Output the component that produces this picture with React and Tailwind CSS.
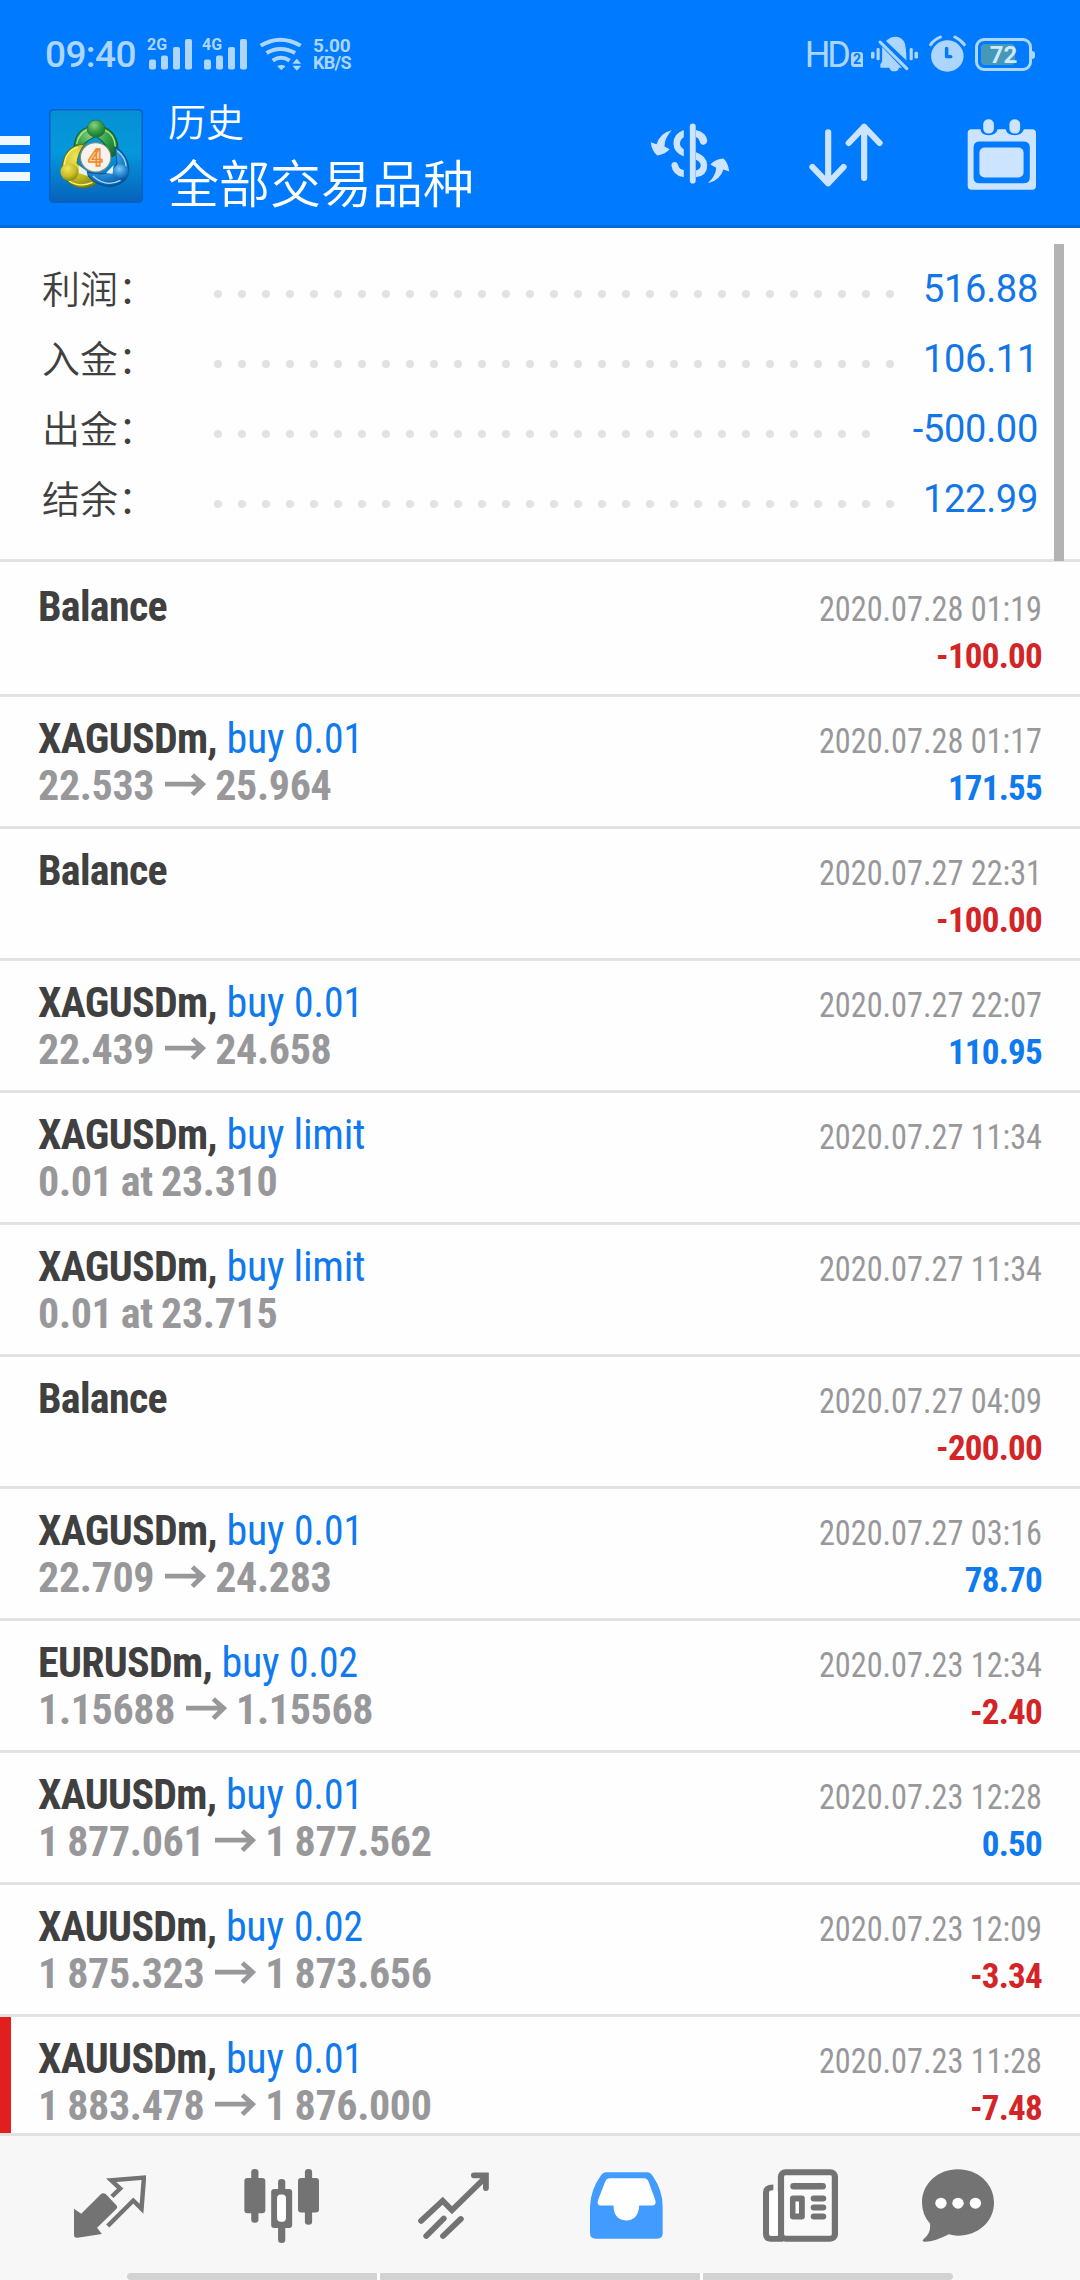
import React from "react";

const summary = [
  { label: "利润：", value: "516.88", dots: 29 },
  { label: "入金：", value: "106.11", dots: 29 },
  { label: "出金：", value: "-500.00", dots: 28 },
  { label: "结余：", value: "122.99", dots: 29 },
];

const deals = [
  { title: "Balance", time: "2020.07.28 01:19", profit: "-100.00" },
  { title: "XAGUSDm,", action: "buy", volume: "0.01", from: "22.533", to: "25.964", time: "2020.07.28 01:17", profit: "171.55" },
  { title: "Balance", time: "2020.07.27 22:31", profit: "-100.00" },
  { title: "XAGUSDm,", action: "buy", volume: "0.01", from: "22.439", to: "24.658", time: "2020.07.27 22:07", profit: "110.95" },
  { title: "XAGUSDm,", action: "buy limit", note: "0.01 at 23.310", time: "2020.07.27 11:34" },
  { title: "XAGUSDm,", action: "buy limit", note: "0.01 at 23.715", time: "2020.07.27 11:34" },
  { title: "Balance", time: "2020.07.27 04:09", profit: "-200.00" },
  { title: "XAGUSDm,", action: "buy", volume: "0.01", from: "22.709", to: "24.283", time: "2020.07.27 03:16", profit: "78.70" },
  { title: "EURUSDm,", action: "buy", volume: "0.02", from: "1.15688", to: "1.15568", time: "2020.07.23 12:34", profit: "-2.40" },
  { title: "XAUUSDm,", action: "buy", volume: "0.01", from: "1 877.061", to: "1 877.562", time: "2020.07.23 12:28", profit: "0.50" },
  { title: "XAUUSDm,", action: "buy", volume: "0.02", from: "1 875.323", to: "1 873.656", time: "2020.07.23 12:09", profit: "-3.34" },
  { title: "XAUUSDm,", action: "buy", volume: "0.01", from: "1 883.478", to: "1 876.000", time: "2020.07.23 11:28", profit: "-7.48", stopped: true },
];

const Icon = ({ box, className, children }) => (
  <svg viewBox={box} preserveAspectRatio="none" className={`block shrink-0 ${className}`}>
    {children}
  </svg>
);

const Signal = ({ label }) => (
  <div className="relative w-[44px] h-[31px]">
    <span className="absolute -left-px -top-[2px] text-[16px] leading-[16px] font-bold">{label}</span>
    <Icon box="0 0 44 31" className="w-[44px] h-[31px]">
      <g fill="currentColor">
        <rect x="1" y="20.500" width="7" height="10" rx="2" />
        <rect x="13" y="16.500" width="7" height="14" rx="2" />
        <rect x="25" y="8" width="7" height="22.500" rx="2" />
        <rect x="37" y="0" width="7" height="30.500" rx="2" />
      </g>
    </Icon>
  </div>
);

const StatusBar = () => (
  <div className="flex items-start h-[100px] pt-[34px] pl-[45px] pr-[48px] text-[#add6ff]">
    <span className="text-[37px] leading-[42px] tracking-[-0.6px] font-medium w-[103px]">09:40</span>
    <div className="flex gap-[11px] pt-[5px]">
      <Signal label="2G" />
      <Signal label="4G" />
    </div>
    <Icon box="750 112 128 102" className="w-[44px] h-[34px] mt-[3px] ml-[12px]">
      <g fill="none" stroke="currentColor" strokeWidth="12" strokeLinecap="butt">
        <path d="M755 138 Q812 102 871 138" />
        <path d="M772 160 Q812 136 855 160" />
        <path d="M790 183 Q814 166 839 183" />
      </g>
      <path d="M803 200 Q815 192 827 200 L815 212 Z M847 192 L860 177 L873 192 Z M847 198 L860 213 L873 198 Z" fill="currentColor" />
    </Icon>
    <p className="ml-[10px] pt-[3px] text-[19px] leading-[17px] tracking-[-0.2px] font-bold">
      5.00
      <br />
      <span className="text-[18px] tracking-[-0.7px]">KB/S</span>
    </p>
    <div className="flex ml-auto">
      <span className="text-[36px] leading-[42px] tracking-[-3px]">HD</span>
      <span className="mt-[18px] ml-[3px] w-[12px] h-[15px] rounded-[3px] rounded-br-none bg-[#add6ff] text-[#007aff] text-[14px] leading-[15px] font-bold text-center">2</span>
      <Icon box="963 105 135 110" className="w-[47px] h-[37px] mt-[1px] ml-[8px]">
        <g fill="currentColor">
          <path d="M1006 123 C1022 105 1048 106 1058 124 Q1064 134 1065 181 Z" />
          <path d="M995 141 L1052 202 H1043 Q1042 213 1030 213 Q1018 213 1016 202 H990 V192 L995 184 Z" />
          <rect x="963" y="155" width="10" height="20" rx="4" />
          <rect x="979" y="144" width="9" height="36" rx="4" />
          <rect x="1074" y="144" width="9" height="36" rx="4" />
          <rect x="1088" y="155" width="10" height="20" rx="4" />
        </g>
        <path d="M989 126 L1066 205" stroke="currentColor" strokeWidth="9" strokeLinecap="round" />
      </Icon>
      <Icon box="1131 103 107 111" className="w-[37px] h-[37px] mt-px ml-[11px]">
        <circle cx="1184" cy="166" r="47" fill="currentColor" />
        <path d="M1136 132 Q1144 118 1164 109 M1233 132 Q1224 118 1206 109" fill="none" stroke="currentColor" strokeWidth="9" strokeLinecap="round" />
        <path d="M1182 143 V168 H1194" fill="none" stroke="#007aff" strokeWidth="10" strokeLinecap="round" strokeLinejoin="round" />
      </Icon>
      <div className="relative w-[57px] h-[33px] mt-[4px] ml-[9px] border-[3px] border-current rounded-[9px]">
        <div className="absolute left-[3px] top-[3px] w-[34px] h-[21px] rounded-[4px] bg-[#4598b8]" />
        <div className="absolute -right-[6px] top-[10px] w-[3px] h-[8px] rounded-r bg-current" />
        <span className="absolute left-0 w-full top-[1px] text-center text-[24px] leading-[26px] font-bold text-[#cfe9ff]">72</span>
      </div>
    </div>
  </div>
);

const Logo = () => (
  <Icon box="142 326 272 282" className="w-[94px] h-[94px]">
    <defs>
      <linearGradient id="sky" x1="0" y1="0" x2="0" y2="1">
        <stop offset="0" stopColor="#0690d4" />
        <stop offset="0.450" stopColor="#0598dc" />
        <stop offset="1" stopColor="#0662bc" />
      </linearGradient>
      <radialGradient id="green" cx="40%" cy="30%" r="75%">
        <stop offset="0" stopColor="#8fd08a" />
        <stop offset="0.500" stopColor="#35a045" />
        <stop offset="1" stopColor="#127030" />
      </radialGradient>
      <radialGradient id="yellow" cx="40%" cy="30%" r="75%">
        <stop offset="0" stopColor="#f0e65a" />
        <stop offset="0.600" stopColor="#c9bb25" />
        <stop offset="1" stopColor="#7d8414" />
      </radialGradient>
      <radialGradient id="blue" cx="40%" cy="30%" r="75%">
        <stop offset="0" stopColor="#7fc8f5" />
        <stop offset="0.600" stopColor="#2285d0" />
        <stop offset="1" stopColor="#075098" />
      </radialGradient>
    </defs>
    <rect x="144" y="328" width="268" height="278" rx="12" fill="url(#sky)" stroke="#0860c4" strokeWidth="5" />
    <path d="M215 438 C218 400 240 377 278 377 C317 377 341 405 341 444 Q337 468 318 470 Q311 428 278 408 Q247 422 238 438 Z" fill="url(#green)" stroke="#14601f" strokeWidth="3" />
    <path d="M222 431 Q229 393 260 386 M300 388 Q332 401 334 440" fill="none" stroke="#a9e693" strokeWidth="4" />
    <path d="M245 431 Q184 435 179 508 Q190 559 242 563 Q274 558 282 544 L255 522 L223 488 Q226 458 245 431 Z" fill="url(#yellow)" stroke="#636f12" strokeWidth="3" />
    <path d="M187 493 Q189 452 225 441 M200 542 Q231 563 268 546" fill="none" stroke="#fff57c" strokeWidth="4" />
    <path d="M333 440 Q371 462 373 510 Q369 551 318 559 Q266 552 249 515 L290 521 Q326 520 339 488 Z" fill="url(#blue)" stroke="#075392" strokeWidth="3" />
    <path d="M340 452 Q366 473 365 502 M269 527 Q307 563 349 540" fill="none" stroke="#9bdcff" strokeWidth="4" />
    <path d="M228 495 L251 512 L254 527 L228 518 Z M307 518 L329 495 L326 520 Z" fill="#e9f2ed" />
    <circle cx="278" cy="385" r="26" fill="url(#green)" stroke="#246f32" strokeWidth="2" />
    <circle cx="201" cy="515" r="26" fill="url(#yellow)" />
    <circle cx="350" cy="515" r="23" fill="url(#blue)" />
    <circle cx="277" cy="471" r="44" fill="#f4f3ee" stroke="#888b72" strokeWidth="3" />
    <text x="276" y="497" textAnchor="middle" fill="#fbd9a8" stroke="#f0872c" strokeWidth="4" className="font-['Roboto'] text-[74px] font-bold">4</text>
  </Icon>
);

const Header = () => (
  <header className="h-[228px] bg-[#007aff] border-b-[3px] border-[#006bdf]">
    <StatusBar />
    <div className="flex items-start text-[#cce4ff]">
      <div className="flex flex-col gap-[9.500px] mt-[36px]">
        <div className="w-[30px] h-[8.500px] bg-[#f0f8ff]" />
        <div className="w-[30px] h-[8.500px] bg-[#f0f8ff]" />
        <div className="w-[30px] h-[8.500px] bg-[#f0f8ff]" />
      </div>
      <div className="ml-[19px] mt-[9px]">
        <Logo />
      </div>
      <div className="flex flex-col ml-[25px] w-[482px] -mt-[2px] text-white font-[350] font-['Noto_Sans_CJK_SC',sans-serif]">
        <span className="text-[38px] leading-[44px]">历史</span>
        <span className="text-[51px] leading-[60px] mt-[9px]">全部交易品种</span>
      </div>
      <Icon box="320 370 232 184" className="w-[80px] h-[61px] mt-[23px]">
        <path d="M444 380 V544" stroke="currentColor" strokeWidth="17" strokeLinecap="round" fill="none" />
        <path d="M418 391 V413 Q407 420 407 432 Q407 443 418 449 V471 Q388 459 388 431 Q388 402 418 391 Z" fill="currentColor" />
        <path d="M453 391 Q482 398 486 422 Q486 434 474 436 Q466 435 464 425 Q462 415 453 412 Z" fill="currentColor" />
        <path d="M453 458 Q486 469 486 498 Q486 529 453 534 V513 Q467 509 467 498 Q467 487 453 481 Z" fill="currentColor" />
        <path d="M382 498 Q383 488 392 488 Q400 489 402 499 Q406 510 418 512 V534 Q386 528 382 498 Z" fill="currentColor" />
        <path d="M383 392 Q361 417 362 441 L377 449 Q366 463 341 468 Q326 456 322 428 L339 434 Q348 401 383 392 Z" fill="currentColor" />
        <path d="M488 552 Q511 529 512 505 L495 495 Q510 479 533 477 Q546 489 550 516 L533 510 Q523 543 488 552 Z" fill="currentColor" />
      </Icon>
      <Icon box="780 370 216 192" className="w-[74px] h-[64px] mt-[23px] ml-[79px]">
        <path d="M836 398 V551 M790 502 L836 551 L881 502 M941 535 V381 M896 430 L941 381 L986 430" fill="none" stroke="currentColor" strokeWidth="18" strokeLinecap="round" strokeLinejoin="round" />
      </Icon>
      <Icon box="1241 358 200 214" className="w-[69px] h-[71px] mt-[19px] ml-[84px]">
        <path fillRule="evenodd" d="M1254 389 H1280 Q1282 407 1304 407 Q1325 407 1330 389 H1353 Q1357 407 1379 407 Q1400 407 1406 389 H1430 Q1441 389 1441 401 V560 Q1441 571 1430 571 H1254 Q1243 571 1243 560 V401 Q1243 389 1254 389 Z M1278 426 Q1260 426 1260 443 V534 Q1260 552 1278 552 H1404 Q1423 552 1423 534 V443 Q1423 426 1404 426 Z" fill="currentColor" />
        <rect x="1277" y="444" width="128" height="90" rx="15" fill="currentColor" />
        <rect x="1288" y="359" width="31" height="43" rx="15" fill="currentColor" />
        <rect x="1364" y="359" width="31" height="43" rx="15" fill="currentColor" />
      </Icon>
    </div>
  </header>
);

const Summary = () => (
  <section className="relative h-[334px] pt-[25px] pl-[42px] pr-[42px] border-b-[3px] border-[#e2e2e2] bg-[#fefefe]">
    {summary.map((item) => (
      <div key={item.label} className="flex items-center h-[70px]">
        <span className="w-[172px] pb-[4px] text-[38px] font-[350] text-[#404040] font-['Noto_Sans_CJK_SC',sans-serif]">{item.label}</span>
        <div className="flex gap-4 pt-[12px]">
          {Array.from({ length: item.dots }, (_, i) => (
            <div key={i} className="w-2 h-2 rounded-full bg-[#e2e2e2]" />
          ))}
        </div>
        <span className="ml-auto pt-[2px] text-[38px] tracking-[-0.3px] text-[#1276e8]">{item.value}</span>
      </div>
    ))}
    {/* Scrollbar */}
    <div className="absolute left-[1054px] top-[16px] w-[10px] h-[317px] bg-[#b3b3b3]" />
  </section>
);

const Arrow = () => (
  <Icon box="478 634 120 68" className="w-[41px] h-[23px] ml-[11px] mr-[9px] -mt-[3px]">
    <path d="M478 667 H590 M558 640 L588 667 L558 697" fill="none" stroke="#98989b" strokeWidth="14" />
  </Icon>
);

const DealRow = ({ deal }) => (
  <div className="relative flex justify-between h-[132px] pt-[18px] pl-[38px] pr-[38px] border-b-[3px] border-[#e2e2e2] font-['Roboto_Condensed','Roboto',sans-serif] [font-stretch:75%] whitespace-nowrap">
    {deal.stopped && <div className="absolute left-0 top-0 w-[11px] h-full bg-[#e31e1e]" />}
    <div className="text-[42px] leading-[47px]">
      <div className="flex">
        <span className="font-bold tracking-[-0.7px] text-[#404040]">{deal.title}</span>
        {deal.action && <span className="ml-[9.500px] tracking-[-0.25px] text-[#0f7af0]">{deal.action}</span>}
        {deal.volume && <span className="ml-[10px] origin-left scale-x-[0.94] text-[#0f7af0]">{deal.volume}</span>}
      </div>
      <div className="flex items-center font-bold tracking-[-0.35px] [word-spacing:-1px] text-[#98989b]">
        {deal.note}
        {deal.from && (
          <>
            <span>{deal.from}</span>
            <Arrow />
            <span>{deal.to}</span>
          </>
        )}
      </div>
    </div>
    <div className="flex flex-col items-end pt-[3px] text-[35px] leading-[47px]">
      <span className="origin-right scale-x-[0.922] text-[#98989b]">{deal.time}</span>
      {deal.profit && (
        <span className={`font-bold tracking-[-0.75px] ${deal.profit.startsWith("-") ? "text-[#d32427]" : "text-[#0f7af0]"}`}>{deal.profit}</span>
      )}
    </div>
  </div>
);

const BottomNav = () => (
  <nav className="relative h-[147px] border-t-[3px] border-[#e2e2e2] bg-[#f7f7f7] flex items-start pl-[74px] text-[#737373]">
    {/* Quotes */}
    <Icon box="215 164 209 190" className="w-[72px] h-[63px] mt-[39px]">
      <path d="M215 266 L236 281 L292 223 Q299 215 308 222 L338 255 Q343 261 337 267 L282 323 L296 342 L225 353 Q215 354 215 346 Z" fill="currentColor" />
      <path d="M325 229 L349 205 L323 180 L418 172 L411 266 L387 241 L313 318" fill="none" stroke="currentColor" strokeWidth="13" />
    </Icon>
    {/* Charts */}
    <Icon box="708 147 218 223" className="w-[75px] h-[74px] mt-[33px] ml-[98px]">
      <g fill="currentColor">
        <rect x="709" y="174" width="61" height="106" rx="9" />
        <rect x="729" y="147" width="21" height="162" rx="10" />
        <rect x="865" y="174" width="61" height="104" rx="9" />
        <rect x="885" y="147" width="21" height="168" rx="10" />
        <rect x="807" y="177" width="21" height="40" rx="10" />
        <rect x="807" y="310" width="21" height="60" rx="10" />
        <rect x="787" y="207" width="61" height="118" rx="9" />
      </g>
      <rect x="804" y="224" width="26" height="82" rx="11" fill="#fff" />
    </Icon>
    {/* Trade */}
    <Icon box="1213 155 207 200" className="w-[71px] h-[67px] mt-[36px] ml-[99px]">
      <path d="M1222 301 L1285 241 L1312 269 L1408 173 M1376 165 H1411 V203" fill="none" stroke="currentColor" strokeWidth="17" strokeLinecap="round" />
      <path d="M1237 346 L1288 294 M1286 346 L1338 295" fill="none" stroke="currentColor" strokeWidth="17" strokeLinecap="round" />
    </Icon>
    {/* History */}
    <Icon box="146 155 211 200" className="w-[73px] h-[67px] mt-[36px] ml-[101px]">
      <path d="M193 156 H311 Q321 156 328 168 Q356 211 356 258 V338 Q356 354 340 354 H162 Q146 354 146 338 V258 Q148 208 176 168 Q183 156 193 156 Z" fill="#429bff" />
      <path d="M204 174 H302 Q311 174 315 183 L335 239 Q338 255 325 255 H288 Q286 299 250 300 Q214 297 214 255 H178 Q165 255 169 239 L190 183 Q194 174 204 174 Z" fill="#fff" />
    </Icon>
    {/* News */}
    <Icon box="647 146 217 218" className="w-[75px] h-[73px] mt-[33px] ml-[100px]">
      <rect x="699" y="156" width="156" height="198" rx="13" fill="#fafafa" stroke="currentColor" strokeWidth="18" />
      <path d="M677 201 Q656 201 656 216 V340 Q656 354 670 354 H705" fill="none" stroke="currentColor" strokeWidth="18" />
      <rect x="665" y="210" width="25" height="135" rx="6" fill="#fff" />
      <rect x="726" y="188" width="103" height="19" rx="9" fill="currentColor" />
      <rect x="785" y="225" width="45" height="18" rx="9" fill="currentColor" />
      <rect x="785" y="252" width="45" height="18" rx="9" fill="currentColor" />
      <rect x="785" y="279" width="45" height="18" rx="9" fill="currentColor" />
      <rect x="725" y="225" width="43" height="72" rx="9" fill="currentColor" />
      <rect x="741" y="243" width="10" height="36" fill="#fff" />
    </Icon>
    {/* Messages */}
    <Icon box="1109 146 209 218" className="w-[72px] h-[73px] mt-[33px] ml-[84px]">
      <path d="M1213 147 C1272 147 1318 190 1318 246 C1318 303 1272 345 1213 345 Q1200 345 1187 341 Q1145 364 1116 363 Q1106 361 1115 354 Q1136 336 1132 309 Q1109 282 1109 246 C1109 190 1155 147 1213 147 Z" fill="currentColor" />
      <circle cx="1164" cy="248" r="16.500" fill="#fff" />
      <circle cx="1213.500" cy="248" r="16.500" fill="#fff" />
      <circle cx="1264" cy="248" r="16.500" fill="#fff" />
    </Icon>
    {/* Gesture handles */}
    <div className="absolute left-[127px] bottom-0 flex gap-[3px] h-[7px] bg-white rounded-t">
      <div className="w-[250px] bg-[#d3d3d3] rounded-l" />
      <div className="w-[320px] bg-[#d3d3d3]" />
      <div className="w-[250px] bg-[#d3d3d3] rounded-r" />
    </div>
  </nav>
);

export default function App() {
  return (
    <div className="flex flex-col w-[1080px] h-[2280px] overflow-hidden bg-[#fefefe] font-['Roboto',sans-serif]">
      <Header />
      <Summary />
      <main className="flex-1 min-h-0 overflow-hidden pt-[3px]">
        {deals.map((deal) => (
          <DealRow key={deal.time + deal.note + deal.profit} deal={deal} />
        ))}
      </main>
      <BottomNav />
    </div>
  );
}
